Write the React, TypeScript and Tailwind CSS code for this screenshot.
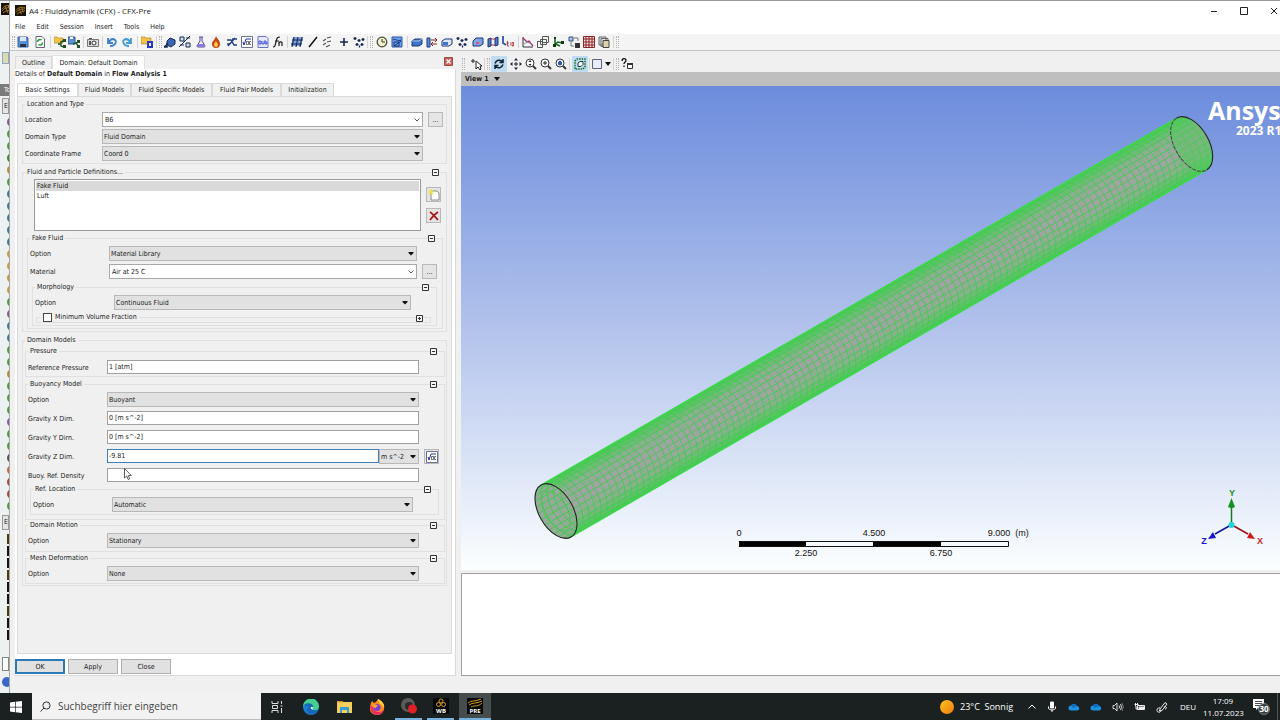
import { useId } from "react";
import type { ReactNode } from "react";
import clsx from "clsx";

const navy = "#16264f";

const glyphs: Record<string, ReactNode> = {
  save: (
    <>
      <path d="M1 1h9l1 1v9H1z" fill="#5b8fd6" stroke="#3b5f9e" />
      <path d="M3 1h6v4H3z" fill="#dbe7f7" />
      <path d="M3 8h6v3H3z" fill="#26344f" />
    </>
  ),
  reload: (
    <>
      <path d="M2 .5h6l2.500 2.500v8.500h-8.500z" fill="#fff" stroke="#667" />
      <path d="M3.500 6a2.500 2.500 0 0 1 4-2M8.500 6.500a2.500 2.500 0 0 1-4 2" fill="none" stroke="#259b35" strokeWidth="1.500" />
    </>
  ),
  importMesh: (
    <>
      <path d="M0 1h3l1 1h5v5H0z" fill="#f1c646" stroke="#a97b13" strokeWidth=".6" />
      <path d="M4 8h3M7 5v5l3 1M7 6l4-2" fill="none" stroke="#1d5a28" strokeWidth="1.400" />
      <path d="M9 3h3v3H9zM9 9h3v3H9z" fill="#274a2b" />
    </>
  ),
  exportMesh: (
    <>
      <path d="M0 1h7v7H0z" fill="#5b8fd6" stroke="#34568e" />
      <path d="M2 1h3v2H2z" fill="#fff" />
      <path d="M5 8l3-1 3-2M8 7l3 4" fill="none" stroke="#1d5a28" strokeWidth="1.400" />
      <path d="M9 4h3v3H9zM9 9h3v3H9z" fill="#274a2b" />
    </>
  ),
  camera: (
    <>
      <path d="M.5 3.500h11v7H.5z" fill="#ddd" stroke="#777" />
      <path d="M2 2h3v1H2zM2 5h2v4H2z" fill="#555" />
      <circle cx="7" cy="7" r="2" fill="#fff" stroke="#333" />
    </>
  ),
  undo: <path d="M4 10c6 0 8-6 3-7-2 0-3 1-4 3M2 2v5h5" fill="none" stroke="#3f7fc4" strokeWidth="1.800" />,
  redo: <path d="M8 10C2 10 0 4 5 3c2 0 3 1 4 3M10 2v5H5" fill="none" stroke="#3f9bd4" strokeWidth="1.800" />,
  openCcl: (
    <>
      <path d="M0 1h4l1 1h5v6H0z" fill="#f1c646" stroke="#a97b13" strokeWidth=".6" />
      <path d="M6 5h6v7H6z" fill="#2a36c8" />
      <path d="M8 7h2v3H8z" fill="#e6e9ff" />
    </>
  ),
  domain: (
    <>
      <path d="M3 5l3-3 5 2v4l-4 3-4-2z" fill="#3b68b5" stroke={navy} />
      <path d="M0 11l4-3M3 7v4H0" stroke={navy} fill="none" strokeWidth="1.500" />
    </>
  ),
  interface: (
    <>
      <path d="M1 1h4v4H1zM7 7h4v4H7z" fill="#cfe0f5" stroke={navy} />
      <path d="M0 11L11 0M7 2h4M1 9h4" stroke={navy} />
    </>
  ),
  flask: (
    <>
      <path d="M4 1h4M5 1v4L2 10q0 1 1 1h6q1 0 1-1L7 5V1" fill="#f4f0ff" stroke="#5a4a9a" />
      <path d="M3 8h6l1 3H2z" fill="#8d7be0" />
    </>
  ),
  flame: (
    <>
      <path d="M6 0c1 3 4 4 4 8a4 4 0 0 1-8 0c0-3 3-4 4-8z" fill="#c4470f" />
      <path d="M6 5c1 2 2 2 2 4a2 2 0 0 1-4 0c0-2 1-2 2-4z" fill="#ffc54a" />
    </>
  ),
  species: <path d="M1 4h4l3 5h3M2 10l7-8M6 3h5M1 8h3" fill="none" stroke="#1d3f86" strokeWidth="1.400" />,
  sqrt: (
    <>
      <path d="M.5.5h11v11H.5z" fill="#fff" stroke="#6a7296" />
      <path d="M2 6l1 3 2-6h5" fill="none" stroke="#2533b8" />
      <path d="M5.500 5.500h2v3h-2zM10 5.500H8.500v3H10" fill="none" stroke="#334" strokeWidth=".7" />
    </>
  ),
  subroutine: (
    <>
      <path d="M1 .5h8l2 2v9H1z" fill="#e6e9ff" stroke="#6a74c8" />
      <path d="M2 8V5h2v3zM5 5v3h2V5M8 4v4h2V6H8" fill="none" stroke="#2533d8" strokeWidth=".8" />
    </>
  ),
  fn: <path d="M1 11c2 0 2-1 3-5s1-5 4-5M3 5h4M7 10V6M7 7c1-2 3-1 3 0v3" fill="none" stroke="#151515" strokeWidth="1.200" />,
  plane: (
    <>
      <path d="M2 1h10l-2 9H0z" fill="#7ea3e0" />
      <path d="M3 1L1 11M7 1L5 11M11 1L9 11M1 4h11M0 8h11" stroke={navy} strokeWidth="1.100" />
    </>
  ),
  line: <path d="M2 11L10 1" stroke="#111" strokeWidth="1.500" />,
  polyline: <path d="M1 5l3-2M5 2l4-1M1 9l3-2M5 6l4-1M4 11l4-2" stroke="#555" strokeWidth="1.100" />,
  point: <path d="M6 2v8M2 6h8" stroke={navy} strokeWidth="1.600" />,
  cloud: (
    <path
      d="M2 1v3M.5 2.500h3M6 3v3M4.500 4.500h3M10 2v3M8.500 3.500h3M4 7v3M2.500 8.500h3M9 7v3M7.500 8.500h3M6.500 9.500v2"
      stroke={navy}
      strokeWidth="1.300"
    />
  ),
  clock: (
    <>
      <circle cx="6" cy="6" r="4.800" fill="#f4f2cf" stroke="#4b4a35" strokeWidth="1.300" />
      <path d="M6 3v3h3" fill="none" stroke="#333" />
    </>
  ),
  output: (
    <>
      <path d="M1 1h10v10H1z" fill="#6f9fe8" stroke="#2b56a8" />
      <path d="M2 4c2-2 5 2 8 0M3 6h5v4H3zM3 10l7-5" fill="none" stroke="#173573" />
    </>
  ),
  boundary: (
    <>
      <path d="M1 5l3-2h7v5l-3 2H1z" fill="#3f74cc" stroke="#1c3977" />
      <path d="M1 5h7l3-2" fill="none" stroke="#cde" strokeWidth=".8" />
    </>
  ),
  inlet: (
    <>
      <path d="M1 2h3v9H1z" fill="#5b8fe0" stroke="#1c3977" />
      <path d="M5 4h6M5 8h6M9 2l2 2-2 2M7 6L5 8l2 2" stroke="#8a2020" fill="none" />
    </>
  ),
  opening: (
    <>
      <path d="M1 5l3-2h7v5l-3 2H1z" fill="#dce8f8" stroke="#1c3977" />
      <path d="M2 6h5v3H2z" fill="#3f74cc" />
    </>
  ),
  subdomain: (
    <>
      <path d="M1 5l3-3h7v6l-3 2H1z" fill="#7fa4e6" stroke="#1c3977" />
      <path d="M4 6h3v2H4z" fill="#d9576b" />
    </>
  ),
  interfacePair: (
    <>
      <path d="M1 3l3-1v8l-3 1zM8 2l3-1v8l-3 1z" fill="#4a79cf" stroke="#1c3977" />
      <path d="M4 3h4M4 9h4" stroke="#b33" />
    </>
  ),
  initial: (
    <>
      <path d="M1 0v7l3 2" fill="none" stroke="#2c57aa" strokeWidth="1.800" />
      <path d="M5.500 5v5H7M4.500 7H7M8 7h1M8 9h1M10 6.500h1.500v3.500H10z" fill="none" stroke="#a22" strokeWidth=".8" />
    </>
  ),
  monitor: (
    <>
      <path d="M1 1v10h10" fill="none" stroke="#333" />
      <path d="M1 2l4 4 2-1 4 5" fill="none" stroke="#b02a7a" strokeWidth="1.300" />
      <path d="M2 8l3-2 5 2" fill="none" stroke="#888" />
    </>
  ),
  stack: <path d="M5.500.5h6v6h-6zM3.500 3.500h6v5h-6zM.5 5.500h5v6h-5z" fill="#f3f3f3" stroke="#555" />,
  tree: (
    <>
      <path d="M3 1v7l3-2 4 1M3 8l5 2" fill="none" stroke="#186b26" strokeWidth="1.600" />
      <path d="M2 1h2v2H2zM9 5h3v3H9zM1 8h3v3H1z" fill="#103b17" />
    </>
  ),
  swap: (
    <>
      <path d="M1 1h4v4H1z" fill="#a8c2ee" stroke="#35507f" />
      <path d="M7 7h5v5H7z" fill="#333" />
      <path d="M6 2h4v3M3 6v4h3" fill="none" stroke="#777" />
    </>
  ),
  table: (
    <>
      <path d="M.5.5h11v11H.5z" fill="#f6dede" />
      <path d="M.5.5h11v11H.5zM3 0v12M6 0v12M9 0v12M0 3h12M0 6h12M0 9h12" fill="none" stroke="#8b2222" />
    </>
  ),
  copies: (
    <>
      <path d="M1 1h7v8H1zM3 2.500h7v8H3z" fill="#e6e6e6" stroke="#666" />
      <path d="M5 4.500h6v7H5z" fill="#d9d2a8" stroke="#444" />
    </>
  ),
  pick: <path d="M1 3h4M3 1v4M6 3v8l2-2 2 3 1-1-1-3h2z" fill="#fff" stroke="#222" />,
  rotate: <path d="M2 5.500C3 2 7 1 10 4M10 6.500C9 10 5 11 2 8M10 1v3.500H6.500M2 11V7.500h3.500" fill="none" stroke="#10202e" strokeWidth="1.500" />,
  move: (
    <path
      d="M6 0l2 2.500H4zM6 12l2-2.500H4zM0 6l2.500-2v4zM12 6L9.500 4v4zM5.500 4h1v1.500H8v1H6.500V8h-1V6.500H4v-1h1.500z"
      fill="#1b2230"
    />
  ),
  zoomDrag: (
    <>
      <circle cx="5" cy="5" r="4" fill="#fff" stroke="#333" />
      <path d="M8 8l3 3" stroke="#333" strokeWidth="1.800" />
      <path d="M5 2l1.500 2h-3zM5 8l1.500-2h-3z" fill="#222" />
    </>
  ),
  zoomBox: (
    <>
      <circle cx="5" cy="5" r="4" fill="#fff" stroke="#333" />
      <path d="M8 8l3 3" stroke="#333" strokeWidth="1.800" />
      <path d="M5 3v4M3 5h4" stroke="#222" />
    </>
  ),
  zoomFit: (
    <>
      <circle cx="5" cy="5" r="4" fill="#fff" stroke="#333" />
      <path d="M8 8l3 3" stroke="#333" strokeWidth="1.800" />
      <path d="M3 4l2-1.500L7 4v2.500L5 7.500 3 6.500z" fill="#2f57b4" />
    </>
  ),
  highlight: (
    <>
      <path d="M1 3l2-2h8v8l-2 2H1z" fill="none" stroke="#166b2a" strokeWidth="1.500" strokeDasharray="1.500 1" />
      <path d="M4 5l2-1.500h3v3L7 8.500H4z" fill="#fff" stroke="#1b3d33" />
    </>
  ),
  viewport: <path d="M1.500 1.500h9v9h-9z" fill="#e7ecf8" stroke="#5c6478" />,
  help: (
    <>
      <path d="M1 3c0-3 4-3 4-.5C5 4 3 4 3 6M3 7.500V9" fill="none" stroke="#111" strokeWidth="1.300" />
      <path d="M6.500 5.500h5v5h-5z" fill="#fff" stroke="#333" />
      <path d="M6 5h6v2H6z" fill="#333" />
    </>
  ),
  newItem: (
    <>
      <path d="M3 2h6l2 2v7H3z" fill="#fff" stroke="#8a8a8a" />
      <path d="M3 0v6M0 3h6M1 1l4 4M5 1L1 5" stroke="#efe23c" />
    </>
  ),
  remove: <path d="M2 2c3 2 5 5 8 8M10 2C7 4 4 7 2 10" fill="none" stroke="#a51616" strokeWidth="1.700" />,
};

const Glyph = ({ name }: { name: string }) => (
  <svg viewBox="0 0 12 12" className="w-3 h-3" aria-hidden="true">
    {glyphs[name]}
  </svg>
);

const ToolButton = ({ name, active }: { name: string; active?: boolean }) => (
  <button
    type="button"
    aria-label={name}
    className={clsx("flex items-center justify-center", active ? "w-4 h-4 bg-[#bfdcf3]" : "w-3 h-4")}
  >
    <Glyph name={name} />
  </button>
);

const Tools = ({ names, className }: { names: string[]; className: string }) => (
  <div className={clsx("flex justify-between shrink-0", className)}>
    {names.map((n) => (
      <ToolButton key={n} name={n} />
    ))}
  </div>
);

const Sep = ({ className }: { className?: string }) => (
  <span className={clsx("w-px h-3 shrink-0 bg-[#d4d4d4]", className)} />
);

const Grip = ({ className }: { className?: string }) => (
  <span className={clsx("w-[3px] h-3 shrink-0 border-x border-dotted border-[#b4b4b4]", className)} />
);

const TitleBar = () => (
  <header className="flex items-center h-[19px] pl-[5px] bg-white font-['Open_Sans',sans-serif] text-[8px] text-[#222]">
    <AnsysMark className="w-[11px] h-[11px]" />
    <h1 className="ml-[3px]">A4 : Fluiddynamik (CFX) - CFX-Pre</h1>
    <div className="flex ml-auto mr-[2px] gap-[22px]">
      <button type="button" aria-label="Minimize">
        <svg viewBox="0 0 8 8" className="w-2 h-2" stroke="#222">
          <path d="M1 4.500h6" />
        </svg>
      </button>
      <button type="button" aria-label="Maximize">
        <svg viewBox="0 0 8 8" className="w-2 h-2" stroke="#222" fill="none">
          <path d="M.5.5h7v7h-7z" />
        </svg>
      </button>
      <button type="button" aria-label="Close window">
        <svg viewBox="0 0 8 8" className="w-2 h-2" stroke="#222">
          <path d="M1 1l6 6M7 1L1 7" />
        </svg>
      </button>
    </div>
  </header>
);

const AnsysMark = ({ className }: { className?: string }) => (
  <svg viewBox="0 0 12 12" className={className} aria-hidden="true">
    <path d="M0 0h12v12H0z" fill="#17130a" />
    <path d="M1 6c3-4 6-4 10-3M1 8c3-4 7-3 10-4M2 10c3-3 6-2 9-4M4 3l3 7M7 2l2 6" fill="none" stroke="#c58c1e" strokeWidth=".8" />
  </svg>
);

const MainToolbar = () => (
  <div className="flex items-center h-[17px] pl-[2px] border-b border-[#c3c3c3] bg-[#f4f4f4]">
    <Grip />
    <Tools names={["save", "reload"]} className="ml-[2px] w-[29px]" />
    <Sep className="ml-1" />
    <Tools names={["importMesh", "exportMesh"]} className="ml-[3px] w-[26px]" />
    <Sep className="ml-[3px]" />
    <Tools names={["camera"]} className="ml-[3px] w-3" />
    <Sep className="ml-[3px]" />
    <Tools names={["undo", "redo"]} className="ml-[3px] w-[27px]" />
    <Sep className="ml-1" />
    <Tools names={["openCcl"]} className="ml-[3px] w-3" />
    <Sep className="ml-[3px]" />
    <Grip className="ml-[2px]" />
    <Tools
      names={["domain", "interface", "flask", "flame", "species", "sqrt", "subroutine", "fn"]}
      className="ml-[2px] w-[120px]"
    />
    <Sep className="ml-[3px]" />
    <Tools names={["plane", "line", "polyline", "point", "cloud"]} className="ml-[3px] w-[74px]" />
    <Sep className="ml-[2px]" />
    <Grip className="ml-[2px]" />
    <Tools names={["clock", "output"]} className="ml-[3px] w-[27px]" />
    <Sep className="ml-1" />
    <Tools
      names={["boundary", "inlet", "opening", "cloud", "subdomain", "interfacePair", "initial"]}
      className="ml-[3px] w-[103px]"
    />
    <Sep className="ml-1" />
    <Tools names={["monitor", "stack", "tree", "swap", "table", "copies"]} className="ml-[3px] w-[88px]" />
    <Sep className="ml-[3px]" />
    <Grip className="ml-[2px]" />
  </div>
);

const Group = ({
  title,
  children,
  className,
  collapsible = true,
}: {
  title: string;
  children: ReactNode;
  className?: string;
  collapsible?: boolean;
}) => (
  <div className="relative">
    <fieldset className={clsx("flex flex-col min-w-0 border border-[#e0e0e0] pl-[2px]", className)}>
      <legend className="px-[2px] h-[10px] leading-[10px]">{title}</legend>
      {children}
    </fieldset>
    {collapsible && <Collapse />}
  </div>
);

const Collapse = ({ closed }: { closed?: boolean }) => (
  <button type="button" aria-label={closed ? "Expand" : "Collapse"} className="absolute right-2 top-[2px]">
    <svg viewBox="0 0 7 7" className="w-[7px] h-[7px]" fill="#f6f6f6" stroke="#333">
      <path d={closed ? "M.5.5h6v6h-6zM2 3.500h3M3.500 2v3" : "M.5.5h6v6h-6zM2 3.500h3"} />
    </svg>
  </button>
);

const fieldBase = "w-full min-w-0 border text-[7px] leading-[10px] outline-none";

const Select = ({ id, value, editable, label }: { id?: string; value: string; editable?: boolean; label?: string }) => (
  <div className="relative flex-1 min-w-0">
    <select
      id={id}
      aria-label={label}
      className={clsx(
        fieldBase,
        "block h-[15px] appearance-none",
        editable ? "pl-[2px] bg-white border-[#a8a8a8]" : "pl-px bg-[#e1e1e1] border-[#b8b8b8]"
      )}
    >
      <option>{value}</option>
    </select>
    <svg viewBox="0 0 6 4" className="absolute right-[3px] top-[6px] w-[6px] h-1 pointer-events-none" aria-hidden="true">
      {editable ? <path d="M.5.5L3 3 5.500.5" fill="none" stroke="#555" /> : <path d="M.5 0h5v1L3 3.500.5 1z" fill="#111" />}
    </svg>
  </div>
);

const Row = ({
  label,
  select,
  input,
  editable,
  unit,
  focused,
  extra,
  narrow,
}: {
  label: string;
  select?: string;
  input?: string;
  editable?: boolean;
  unit?: string;
  focused?: boolean;
  extra?: ReactNode;
  narrow?: boolean;
}) => {
  const id = useId();
  return (
    <div className="flex items-center h-[15px]">
      <label htmlFor={id} className={clsx("shrink-0 whitespace-nowrap", narrow ? "w-[77px]" : "w-[79px]")}>
        {label}
      </label>
      <div className="flex flex-1 self-start min-w-0">
        {select !== undefined ? (
          <Select id={id} value={select} editable={editable} />
        ) : (
          <input
            id={id}
            type="text"
            defaultValue={input}
            className={clsx(
              fieldBase,
              "flex-1 h-[14px] pl-px bg-white",
              focused ? "border-[#3d7fb8]" : "border-[#a0a0a0]"
            )}
          />
        )}
        {unit && (
          <div className="flex w-10 shrink-0">
            <Select value={unit} label="Unit" />
          </div>
        )}
      </div>
      <div className="w-[15px] ml-[5px] shrink-0">{extra}</div>
    </div>
  );
};

const SmallButton = ({ label, children }: { label: string; children: ReactNode }) => (
  <button
    type="button"
    aria-label={label}
    className="flex items-center justify-center w-[15px] h-[15px] bg-[#e4e4e4] border border-[#b8b8b8]"
  >
    {children}
  </button>
);

const BasicSettings = () => {
  const more = <SmallButton label="Select from list">...</SmallButton>;
  return (
    <div className="flex flex-col gap-[3px] flex-1 pt-[2px] px-1 bg-[#f0f0f0] border border-[#dadada]">
      <Group title="Location and Type" className="gap-[2px] pt-[3px] pb-[2px] pr-[3px]" collapsible={false}>
        <Row narrow label="Location" select="B6" editable extra={more} />
        <Row narrow label="Domain Type" select="Fluid Domain" />
        <Row narrow label="Coordinate Frame" select="Coord 0" />
      </Group>

      <Group title="Fluid and Particle Definitions..." className="gap-[2px] pt-[2px] pb-[2px] pr-[3px]">
        <div className="flex pl-[9px] pr-[2px] gap-[5px]">
          <ul role="listbox" aria-label="Fluids" className="flex-1 h-[52px] p-px bg-white border border-[#9a9a9a]">
            <li role="option" aria-selected="true" className="h-[10px] leading-[10px] pl-px bg-[#d9d9d9]">
              Fake Fluid
            </li>
            <li role="option" aria-selected="false" className="h-[10px] leading-[10px] pl-px">
              Luft
            </li>
          </ul>
          <div className="flex flex-col gap-[6px] pt-2">
            <SmallButton label="New fluid">
              <Glyph name="newItem" />
            </SmallButton>
            <SmallButton label="Delete fluid">
              <Glyph name="remove" />
            </SmallButton>
          </div>
        </div>
        <div className="pl-[2px]">
          <Group title="Fake Fluid" className="gap-[3px] pt-[3px] pb-[2px] pr-[5px]">
            <Row label="Option" select="Material Library" />
            <Row label="Material" select="Air at 25 C" editable extra={more} />
            <div className="pl-[2px]">
              <Group title="Morphology" className="gap-[3px] pt-[3px] pb-[2px] pr-[5px]">
                <Row label="Option" select="Continuous Fluid" />
                <div className="relative pl-px">
                  <fieldset className="min-w-0 border border-[#e0e0e0] pl-1">
                    <legend className="px-[2px] h-[9px] leading-[9px]">
                      <label className="flex items-center gap-[3px]">
                        <input type="checkbox" className="appearance-none w-[9px] h-[9px] bg-white border border-[#444]" />
                        Minimum Volume Fraction
                      </label>
                    </legend>
                  </fieldset>
                  <Collapse closed />
                </div>
              </Group>
            </div>
          </Group>
        </div>
      </Group>

      <Group title="Domain Models" className="pt-px pb-px pr-px" collapsible={false}>
        <Group title="Pressure" className="pt-1 pb-px pr-[5px]">
          <Row label="Reference Pressure" input="1 [atm]" />
        </Group>
        <div className="pt-[2px]">
          <Group title="Buoyancy Model" className="gap-1 pt-[3px] pb-1 pr-[5px]">
            <Row label="Option" select="Buoyant" />
            <Row label="Gravity X Dirn." input="0 [m s^-2]" />
            <Row label="Gravity Y Dirn." input="0 [m s^-2]" />
            <Row
              label="Gravity Z Dirn."
              input="-9.81"
              unit="m s^-2"
              focused
              extra={
                <SmallButton label="Enter expression">
                  <Glyph name="sqrt" />
                </SmallButton>
              }
            />
            <div className="flex flex-col gap-px">
              <Row label="Buoy. Ref. Density" input="" />
              <div className="pl-[2px]">
                <Group title="Ref. Location" className="pt-[3px] pb-[2px] pr-[5px]">
                  <Row label="Option" select="Automatic" />
                </Group>
              </div>
            </div>
          </Group>
        </div>
        <Group title="Domain Motion" className="pt-[3px] pb-[3px] pr-[5px]">
          <Row label="Option" select="Stationary" />
        </Group>
        <div className="pt-px">
          <Group title="Mesh Deformation" className="pt-[3px] pb-[2px] pr-[5px]">
            <Row label="Option" select="None" />
          </Group>
        </div>
      </Group>
    </div>
  );
};

const settingTabs = [
  { name: "Basic Settings", width: "w-[61px]" },
  { name: "Fluid Models", width: "w-[53px]" },
  { name: "Fluid Specific Models", width: "w-[81px]" },
  { name: "Fluid Pair Models", width: "w-[69px]" },
  { name: "Initialization", width: "w-[53px]" },
];

const DetailsPanel = () => (
  <section className="flex flex-col w-[446px] shrink-0 pt-1 pl-[5px]">
    <div className="flex items-end h-[14px]">
      <button type="button" className="w-[37px] h-[13px] border border-b-0 border-[#dadada]">
        Outline
      </button>
      <button type="button" className="w-[93px] h-[14px] bg-white border border-b-0 border-[#e2e2e2]">
        Domain: Default Domain
      </button>
      <button type="button" aria-label="Close panel" className="ml-auto mr-[3px] mb-[3px]">
        <svg viewBox="0 0 9 9" className="w-[9px] h-[9px]">
          <path d="M.5.5h8v8h-8z" fill="#c8605c" stroke="#a04a48" />
          <path d="M2.500 2.500l4 4M6.500 2.500l-4 4" stroke="#fff" strokeWidth="1.300" />
        </svg>
      </button>
    </div>
    <div className="flex flex-col flex-1 bg-white border-b border-r border-[#dadada]">
      <h2 className="h-[10px] leading-[10px]">
        Details of <b>Default Domain</b> in <b>Flow Analysis 1</b>
      </h2>
      <div className="flex flex-col flex-1 pt-1 pl-[2px] pr-[3px]">
        <div className="flex h-[13px]">
          {settingTabs.map((t, i) => (
            <button
              key={t.name}
              type="button"
              className={clsx(
                "border border-b-0 border-[#dadada] whitespace-nowrap",
                t.width,
                i === 0 ? "bg-white" : "bg-[#f0f0f0]"
              )}
            >
              {t.name}
            </button>
          ))}
        </div>
        <BasicSettings />
      </div>
      <div className="flex gap-[3px] pt-[5px] pb-px">
        {["OK", "Apply", "Close"].map((b) => (
          <button
            key={b}
            type="button"
            className={clsx(
              "w-[50px] h-[15px] bg-[#e1e1e1]",
              b === "OK" ? "border-2 border-[#2a7ab8]" : "border border-[#b0b0b0]"
            )}
          >
            {b}
          </button>
        ))}
      </div>
    </div>
  </section>
);

// pipe axis runs along local x, the cross-section is an ellipse seen at an angle
const LENGTH = 734;
const RX = 17;
const RY = 30;
const rings = Array.from({ length: 104 }, (_, i) => (i + 1) * 7);
const strands = Array.from({ length: 13 }, (_, i) => ((i + 1) * Math.PI) / 14);

const Pipe = () => (
  <g transform="translate(556 511) rotate(-30)">
    <defs>
      <linearGradient id="shade" x1="0" y1="0" x2="0" y2="1">
        <stop offset="0" stopColor="#45cf52" />
        <stop offset=".25" stopColor="#8fae93" />
        <stop offset=".5" stopColor="#a3a3a5" />
        <stop offset=".75" stopColor="#8cb090" />
        <stop offset="1" stopColor="#45cf52" />
      </linearGradient>
      <clipPath id="cap">
        <ellipse rx={RX} ry={RY} />
      </clipPath>
    </defs>
    <path
      d={`M0 ${-RY}H${LENGTH}A${RX} ${RY} 0 0 1 ${LENGTH} ${RY}H0A${RX} ${RY} 0 0 1 0 ${-RY}z`}
      fill="url(#shade)"
    />
    <g fill="none" stroke="#46c853">
      {rings.map((x) => (
        <path key={x} d={`M${x} ${-RY}A${RX} ${RY} 0 0 1 ${x} ${RY}`} strokeWidth=".8" />
      ))}
      {rings
        .filter((x) => x % 14 === 0 && x < LENGTH)
        .map((x) => (
          <path key={x} d={`M${x} ${-RY}A${RX} ${RY} 0 0 0 ${x} ${RY}`} strokeWidth=".3" />
        ))}
      {strands.map((t) => {
        const y = -RY * Math.cos(t);
        const dx = RX * Math.sin(t);
        return <path key={t} d={`M${dx} ${y}H${LENGTH + dx}`} strokeWidth=".8" />;
      })}
      <path d={`M0 ${-RY}H${LENGTH}M0 ${RY}H${LENGTH}`} stroke="#3edb4e" strokeWidth="1.200" />
    </g>
    <ellipse rx={RX} ry={RY} fill="#93ab97" />
    <g clipPath="url(#cap)" fill="none" stroke="#3fca4c" strokeWidth=".8">
      {strands.map((t) => (
        <path key={t} d={`M${-RX} ${-RY * Math.cos(t)}H${RX}`} />
      ))}
      {[7, 14, 21, 28].map((o) => (
        <ellipse key={o} cx={o} rx={RX} ry={RY} />
      ))}
      <ellipse rx="11" ry="22" />
    </g>
    <ellipse rx={RX} ry={RY} fill="none" stroke="#222" strokeWidth="1.100" />
    <ellipse cx={LENGTH} rx={RX} ry={RY} fill="#52c95c" fillOpacity=".5" />
    <path d={`M${LENGTH} ${-RY}A${RX} ${RY} 0 0 1 ${LENGTH} ${RY}`} fill="none" stroke="#222" strokeWidth="1.100" />
    <path
      d={`M${LENGTH} ${-RY}A${RX} ${RY} 0 0 0 ${LENGTH} ${RY}`}
      fill="none"
      stroke="#444"
      strokeDasharray="4 1"
    />
  </g>
);

const ScaleBar = () => (
  <g fontSize="9" fontFamily="Liberation Sans, sans-serif" fill="#111" textAnchor="middle">
    <path d="M739 541h67v6h-67zM873 541h68v6h-68z" fill="#000" />
    <path d="M739.500 541.500h269v5h-269z" fill="none" stroke="#111" />
    <text x="739" y="536">0</text>
    <text x="874" y="536">4.500</text>
    <text x="999" y="536">9.000</text>
    <text x="1022" y="536">(m)</text>
    <text x="806" y="556">2.250</text>
    <text x="941" y="556">6.750</text>
  </g>
);

const Triad = () => (
  <g fontSize="9" fontWeight="bold" fontFamily="Liberation Sans, sans-serif" textAnchor="middle">
    <path d="M1231.500 524V506" stroke="#187a1e" strokeWidth="1.500" />
    <path d="M1231.500 498l3.500 9q-3.500 2-7 0z" fill="#149020" />
    <path d="M1232 525l16 9" stroke="#9a1010" strokeWidth="1.500" />
    <path d="M1255 539l-8-1 3-6z" fill="#d01818" />
    <path d="M1231 525l-16 9" stroke="#1010a0" strokeWidth="1.500" />
    <path d="M1208 539l8-1-3-6z" fill="#1414c8" />
    <circle cx="1231.500" cy="525" r="3" fill="#22d3d8" />
    <text x="1232" y="496" fill="#149020">Y</text>
    <text x="1260" y="544" fill="#d01818">X</text>
    <text x="1204" y="544" fill="#1414c8">Z</text>
  </g>
);

const Viewer = () => (
  <section className="flex flex-col flex-1 min-w-0 pt-1 ml-[5px]">
    <div className="flex items-center h-[17px] pl-px">
      <Grip />
      <Tools names={["pick"]} className="ml-[5px] w-3" />
      <Sep className="ml-[2px]" />
      <Grip className="ml-[2px]" />
      <div className="flex ml-px gap-[3px]">
        <ToolButton name="rotate" active />
        <ToolButton name="move" />
        <ToolButton name="zoomDrag" />
        <ToolButton name="zoomBox" />
        <ToolButton name="zoomFit" />
      </div>
      <Sep className="mx-[2px]" />
      <ToolButton name="highlight" active />
      <Sep className="mx-px" />
      <ToolButton name="viewport" />
      <svg viewBox="0 0 6 4" className="ml-[2px] w-[6px] h-1" aria-hidden="true">
        <path d="M0 0h6L3 4z" fill="#111" />
      </svg>
      <Sep className="ml-[2px]" />
      <Grip className="mx-[2px]" />
      <ToolButton name="help" />
    </div>
    <button type="button" className="flex items-center h-[14px] pl-1 gap-[5px] bg-[#bfbfbf] font-bold">
      View 1
      <svg viewBox="0 0 6 4" className="w-[6px] h-1" aria-hidden="true">
        <path d="M0 0h6L3 4z" fill="#111" />
      </svg>
    </button>
    <div className="relative flex-1 overflow-hidden bg-linear-to-b from-[#6c8cdc] via-[#b2c2eb] to-[#fcffff]">
      <svg viewBox="461 86 819 484" className="w-full h-full" role="img" aria-label="Pipe mesh in the 3D view">
        <Pipe />
        <ScaleBar />
        <Triad />
      </svg>
      <div className="absolute left-[747px] top-[9px] font-['Open_Sans',sans-serif] font-bold text-white whitespace-nowrap">
        <p className="text-[25px] leading-[30px]">Ansys</p>
        <p className="pl-7 text-[12px] leading-[12px]">2023 R1</p>
      </div>
    </div>
    <div className="h-[103px] mt-[3px] bg-white border border-r-0 border-[#a0a0a0]" />
  </section>
);

const treeIcons = [
  "#7d5a8c", "#4c9a35", "#4c9a35", "#3c8a28", "#b98a35", "#4c9a35", "#35808a", "#35808a", "#35808a", "#35808a",
  "#35808a", "#c0a040", "#c0a040", "#c09a35", "#c0a040", "#4c9a35", "#8d5a8c", "#35808a", "#35808a", "#4c9a35",
  "#4c9a35", "#b98a35", "#4c9a35", "#4c9a35", "#4c9a35", "#8d5a9c", "#4c9a35", "#4c9a35", "#555555", "#b9703a",
  "#a84436", "#a84436", "#4c9a35",
];

const BackWindow = () => (
  <aside className="flex flex-col w-[10px] shrink-0 overflow-hidden bg-[#eef1f2] border-r border-[#a8a8a8]" aria-hidden="true">
    <AnsysMark className="w-3 h-3 mt-[2px] ml-px shrink-0" />
    <span className="h-3 mt-[37px] mb-[20px] ml-[2px] shrink-0 bg-[#dcdcae] border border-[#8ea6c8]" />
    <span className="h-3 shrink-0 bg-[#7b7b7b] text-white leading-3 pl-1">To</span>
    <span className="h-4 my-[2px] ml-[2px] pl-px shrink-0 leading-[14px] bg-[#e4e4e4] border border-[#999]">E</span>
    <div className="flex flex-col gap-[2px] pt-px pl-[7px]">
      {treeIcons.map((c, i) => (
        <span key={i} className="w-[10px] h-[10px] rounded-full" style={{ backgroundColor: c }} />
      ))}
    </div>
    <span className="h-[15px] my-[4px] ml-[2px] pl-px shrink-0 leading-[13px] bg-[#e4e4e4] border border-[#999]">E</span>
    <div className="flex flex-col gap-[2px] pl-[7px]">
      {Array.from({ length: 9 }, (_, i) => (
        <span key={i} className={clsx("w-[10px] h-[10px]", i % 3 ? "bg-[#16140f]" : "bg-[#4a3c12]")} />
      ))}
    </div>
    <span className="h-[14px] mt-auto ml-[2px] shrink-0 bg-white border border-[#7d8d77]" />
    <span className="w-[10px] h-[10px] my-[6px] ml-[2px] shrink-0 rounded-full bg-[#3868c8]" />
  </aside>
);

const Running = ({ label, active, children }: { label: string; active?: boolean; children: ReactNode }) => (
  <button
    type="button"
    aria-label={label}
    className={clsx("flex items-center justify-center h-full border-b-2 border-[#76b0dd]", active ? "w-8 bg-[#454c4c]" : "w-[27px]")}
  >
    {children}
  </button>
);

const AppTile = ({ text }: { text: string }) => (
  <svg viewBox="0 0 16 16" className="w-4 h-4">
    <path d="M0 0h16v16H0z" fill="#080808" />
    {text === "WB" ? (
      <g fill="none" stroke="#d39a22">
        <circle cx="8" cy="3" r="2" />
        <circle cx="5.500" cy="6.500" r="2" />
        <circle cx="10.500" cy="6.500" r="2" />
      </g>
    ) : (
      <path d="M1 5c3-3 7-1 13-4M2 7c4-3 7-1 13-4M4 9c4-2 7 0 11-4" fill="none" stroke="#d39a22" />
    )}
    <text x="8" y="15" fontSize="6" fontWeight="bold" fontFamily="Open Sans, sans-serif" textAnchor="middle" fill="#fff">
      {text}
    </text>
  </svg>
);

const OneDrive = () => (
  <svg viewBox="0 0 12 8" className="w-3 h-2" role="img" aria-label="OneDrive">
    <path d="M3 7.500a2.500 2.500 0 0 1 0-5A3.500 3.500 0 0 1 9 3a2.300 2.300 0 0 1 .5 4.500z" fill="#1e90e0" />
    <path d="M3 2.500A3.500 3.500 0 0 1 9 3L5 5z" fill="#0f6cbd" />
  </svg>
);

const Taskbar = () => (
  <footer className="flex items-center h-[27px] bg-[#1b2020] font-['Open_Sans',sans-serif] text-white">
    <button type="button" aria-label="Start" className="flex justify-center w-8">
      <svg viewBox="0 0 12 12" className="w-3 h-3" fill="#fff">
        <path d="M0 1.500l5-.7v4.900H0zM5.700.7L12 0v5.700H5.700zM0 6.400h5v4.900l-5-.7zM5.700 6.400H12V12l-6.300-.8z" />
      </svg>
    </button>
    <label className="flex items-center w-[229px] h-full pl-2 gap-[7px] bg-[#f2f2f2] border-b border-[#bbb]">
      <svg viewBox="0 0 11 11" className="w-[11px] h-[11px] shrink-0" fill="none" stroke="#333">
        <circle cx="6.500" cy="4.500" r="3.600" />
        <path d="M4 7L.5 10.500" />
      </svg>
      <input
        type="text"
        aria-label="Suche"
        placeholder="Suchbegriff hier eingeben"
        className="w-full min-w-0 text-[10px] bg-transparent outline-none placeholder:text-[#444]"
      />
    </label>
    <button type="button" aria-label="Task view" className="ml-[10px]">
      <svg viewBox="0 0 12 12" className="w-3 h-3" fill="none" stroke="#ddd">
        <path d="M1 0v2.500h6V0M1.500 4.500h5v3h-5zM1 12V9.500h6V12M10.500 0v3M10.500 7v5M9.500 5h2" />
      </svg>
    </button>
    <button type="button" aria-label="Edge" className="ml-5">
      <svg viewBox="0 0 16 16" className="w-4 h-4">
        <circle cx="8" cy="8" r="8" fill="#1b7fd0" />
        <path d="M0 8a8 8 0 0 1 16-1c0 3-2 4-4 4-2 0-3-1-2-2 1-3-2-5-5-4-3 0-5 2-5 3z" fill="#45cf8f" />
        <path d="M1 6c3-3 8-2 9 1 0 1-1 2 0 3 1 2 3 2 5 1-2 4-7 6-10 3-2-2-1-5 1-6-2-1-4-1-5-2z" fill="#1769b8" />
        <path d="M10 8c-1 1 0 3 2 3-2 0-5-1-4-3z" fill="#fff" />
      </svg>
    </button>
    <button type="button" aria-label="Explorer" className="ml-[18px]">
      <svg viewBox="0 0 15 13" className="w-[15px] h-[13px]">
        <path d="M0 1h5l1 1h9v11H0z" fill="#f5cf5a" />
        <path d="M0 1h5l1 1.500H0z" fill="#d99e1e" />
        <path d="M3 7h9v6h-2v-3H5v3H3z" fill="#3b9bd6" />
      </svg>
    </button>
    <button type="button" aria-label="Firefox" className="ml-[17px]">
      <svg viewBox="0 0 16 16" className="w-4 h-4">
        <path d="M2 4l1-2 2 2c2-1 3-2 4-4 4 2 7 5 6 10-1 4-4 6-7 6-4 0-8-3-7-8z" fill="#ff8a1e" />
        <path d="M9 0c4 2 7 5 6 9-1-2-3-4-5-5z" fill="#ffd23e" />
        <path d="M1 7c0 5 3 9 7 9 3 0 6-2 7-5-4 3-10 3-11-3z" fill="#ef2f5a" />
        <circle cx="8" cy="8.500" r="3.500" fill="#7a3fd8" />
        <path d="M4 6c2-1 4 0 5 1-1 0-2 1-2 2-2 0-3-1-3-3z" fill="#ffab2e" />
      </svg>
    </button>
    <div className="flex h-full ml-[10px] gap-[5px]">
      <Running label="Recorder">
        <svg viewBox="0 0 16 16" className="w-4 h-4">
          <circle cx="7" cy="7" r="7" fill="#5a5a5a" />
          <circle cx="8" cy="8" r="4" fill="#2b2b2b" />
          <circle cx="11.500" cy="11" r="4.500" fill="#e01f26" />
        </svg>
      </Running>
      <Running label="Workbench">
        <AppTile text="WB" />
      </Running>
      <Running label="CFX-Pre" active>
        <AppTile text="PRE" />
      </Running>
    </div>

    <div className="flex items-center h-full ml-auto">
      <span className="w-[14px] h-[14px] rounded-full bg-linear-to-br from-[#ffc21e] to-[#f07c10]" />
      <p className="ml-[6px] w-[68px] text-[9px] whitespace-pre">23°C  Sonnig</p>
      <div className="flex items-center gap-[10px]">
        <svg viewBox="0 0 8 5" className="w-2 h-[5px]" fill="none" stroke="#fff">
          <path d="M.5 4.500L4 1l3.500 3.500" />
        </svg>
        <svg viewBox="0 0 12 12" className="w-3 h-3" fill="#fff" stroke="#fff">
          <path d="M4.500 1h3v6h-3z" />
          <path d="M2.500 5.500v1.500c0 2.500 7 2.500 7 0V5.500M6 9v2" fill="none" />
        </svg>
        <OneDrive />
        <OneDrive />
        <svg viewBox="0 0 12 12" className="w-3 h-3" fill="none" stroke="#eee" strokeWidth=".9">
          <path d="M1 4.500h1.500L5 2v8L2.500 7.500H1zM7 4.500q1 1.500 0 3M8.500 3q2 3 0 6" />
          <path d="M10 2q2.500 4 0 8" stroke="#888" />
        </svg>
        <svg viewBox="0 0 12 12" className="w-3 h-3" fill="none" stroke="#eee">
          <path d="M3.500 4.500h7v4h-7zM1.500 2v3M3.500 2v2M.5 3.500h4M2 5v3h2" />
          <path d="M5 6h5v2H5z" fill="#eee" />
        </svg>
        <svg viewBox="0 0 12 12" className="w-3 h-3" fill="none" stroke="#eee">
          <path d="M4 8l5-6.500 2 1.500-5 6.500-2.500.5zM4 7c-3-1-4 3-2 4s3-1 3-2M8 6c3-1 3 2 1 2" />
        </svg>
      </div>
      <span className="w-[15px] ml-3 text-[8px]">DEU</span>
      <div className="w-[40px] ml-[8px] text-center text-[8px] leading-3">
        <p>17:09</p>
        <p>11.07.2023</p>
      </div>
      <button type="button" aria-label="Notifications" className="ml-[10px] mr-[6px]">
        <svg viewBox="0 0 18 17" className="w-[18px] h-[17px]">
          <path d="M0 1h11v9H5l-2 2v-2H0z" fill="#fff" />
          <path d="M2 3.500h7M2 5.500h7M2 7.500h5" stroke="#1b2020" strokeWidth=".8" />
          <circle cx="11" cy="11" r="5.500" fill="#3a3f3f" stroke="#999" strokeWidth=".7" />
          <text x="11" y="14" fontSize="8" fontWeight="bold" fontFamily="Open Sans, sans-serif" textAnchor="middle" fill="#fff">
            30
          </text>
        </svg>
      </button>
      <span className="w-px h-full mr-[2px] bg-[#555]" />
    </div>
  </footer>
);

export default function App() {
  return (
    <div className="relative flex flex-col min-h-screen bg-[#f0f0f0] font-['DejaVu_Sans_Condensed','DejaVu_Sans',sans-serif] text-[7px] leading-[10px] text-[#1c1c1c]">
      <div className="flex flex-1 border-t border-[#999]">
        <BackWindow />
        <main className="flex flex-col flex-1 min-w-0">
          <TitleBar />
          <nav className="flex items-center h-[14px] pl-[5px] gap-[11px] bg-white">
            {["File", "Edit", "Session", "Insert", "Tools", "Help"].map((m) => (
              <button key={m} type="button">
                {m}
              </button>
            ))}
          </nav>
          <MainToolbar />
          <div className="flex flex-1">
            <DetailsPanel />
            <Viewer />
          </div>
          <div className="h-4 mb-px bg-[#f0f0f0]" />
        </main>
      </div>
      <Taskbar />
      <svg viewBox="0 0 8 12" className="absolute left-[124px] top-[468px] w-2 h-3 pointer-events-none" aria-hidden="true">
        <path d="M.5.5v9.500l2.200-2 1.500 3.500 1.500-.7L4.300 7.500h3z" fill="#fff" stroke="#333" strokeWidth=".8" />
      </svg>
    </div>
  );
}
